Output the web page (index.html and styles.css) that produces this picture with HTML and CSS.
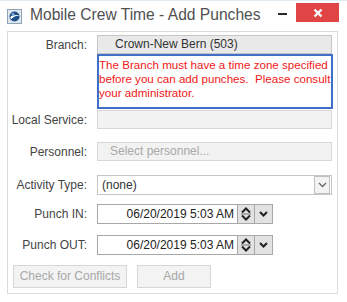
FILE: index.html
```html
<!DOCTYPE html>
<html>

<head>
  <link rel="stylesheet" href="styles.css">
</head>

<body>
  <div class="window">
    <div class="titlebar">
      <svg class="app-icon" width="15" height="15" viewBox="0 0 15 15">
        <rect x="0.5" y="0.5" width="14" height="14" fill="#dfe6ee" stroke="#8ea3b8"/>
        <circle cx="7.5" cy="7.5" r="5" fill="#1f4f86"/>
        <path d="M3 8.5 C5 6 9 5.5 12.5 6.5 C9.5 6.5 6.5 7.5 4.5 10 Z" fill="#ffffff"/>
        <circle cx="6" cy="5.5" r="1.4" fill="#7fb0e0"/>
      </svg>
      <span class="title">Mobile Crew Time - Add Punches</span>
      <span class="minimize"></span>
      <span class="close">
        <svg width="10" height="10" viewBox="0 0 10 10">
          <path d="M1.5 1.5 L8.5 8.5 M8.5 1.5 L1.5 8.5" stroke="#ffffff" stroke-width="2.4"/>
        </svg>
      </span>
    </div>

    <div class="panel">
      <div class="row row-branch">
        <span class="label">Branch:</span>
        <div class="field field-readonly">Crown-New Bern (503)</div>
      </div>
      <div class="row">
        <span class="label"></span>
        <div class="error">The Branch must have a time zone specified<br>before you can add punches.&nbsp; Please consult<br>your administrator.</div>
      </div>
      <div class="row row-local">
        <span class="label">Local Service:</span>
        <div class="field field-disabled"></div>
      </div>
      <div class="row row-personnel">
        <span class="label">Personnel:</span>
        <div class="field field-disabled placeholder">Select personnel...</div>
      </div>
      <div class="row row-activity">
        <span class="label">Activity Type:</span>
        <div class="field field-select">
          <span class="select-text">(none)</span>
          <span class="select-btn">
            <svg width="9" height="6" viewBox="0 0 9 6"><path d="M1 1 L4.5 4.5 L8 1" fill="none" stroke="#666" stroke-width="1.3"/></svg>
          </span>
        </div>
      </div>
      <div class="row row-punchin">
        <span class="label">Punch IN:</span>
        <div class="date-group">
          <div class="date-field">06/20/2019 5:03 AM</div>
          <span class="spin">
            <svg width="12" height="16" viewBox="0 0 12 16">
              <path d="M2 6.5 L6 2.5 L10 6.5" fill="none" stroke="#222" stroke-width="2"/>
              <line x1="1" y1="8" x2="11" y2="8" stroke="#777" stroke-width="1"/>
              <path d="M2 9.5 L6 13.5 L10 9.5" fill="none" stroke="#222" stroke-width="2"/>
            </svg>
          </span>
          <span class="drop">
            <svg width="9" height="6" viewBox="0 0 9 6"><path d="M1 1 L4.5 4.5 L8 1" fill="none" stroke="#222" stroke-width="2"/></svg>
          </span>
        </div>
      </div>
      <div class="row row-punchout">
        <span class="label">Punch OUT:</span>
        <div class="date-group">
          <div class="date-field">06/20/2019 5:03 AM</div>
          <span class="spin">
            <svg width="12" height="16" viewBox="0 0 12 16">
              <path d="M2 6.5 L6 2.5 L10 6.5" fill="none" stroke="#222" stroke-width="2"/>
              <line x1="1" y1="8" x2="11" y2="8" stroke="#777" stroke-width="1"/>
              <path d="M2 9.5 L6 13.5 L10 9.5" fill="none" stroke="#222" stroke-width="2"/>
            </svg>
          </span>
          <span class="drop">
            <svg width="9" height="6" viewBox="0 0 9 6"><path d="M1 1 L4.5 4.5 L8 1" fill="none" stroke="#222" stroke-width="2"/></svg>
          </span>
        </div>
      </div>
      <div class="buttons">
        <span class="button button-check">Check for Conflicts</span>
        <span class="button button-add">Add</span>
      </div>
    </div>
  </div>
</body>
</html>
```

FILE: styles.css
```css
body
{
   margin:0;
   background:#ffffff;
   font-family:"Liberation Sans", Arial, sans-serif;
}

.window
{
   width:347px;
   height:302px;
   background:#ffffff;
   border-top:1px solid #e3ebf3;
   box-sizing:border-box;
}

.titlebar
{
   display:flex;
   align-items:flex-start;
   height:30px;
}
.app-icon
{
   margin:8px 0 0 7px;
}
.title
{
   margin:5px 0 0 8px;
   font-size:15.6px;
   color:#505050;
   width:241px;
}
.minimize
{
   width:9px;
   height:2px;
   background:#2a2a2a;
   margin:12px 0 0 7px;
}
.close
{
   display:flex;
   align-items:center;
   justify-content:center;
   width:43px;
   height:19px;
   margin:2px 0 0 9px;
   background:#e04444;
}

.panel
{
   width:331px;
   height:263px;
   margin-left:7px;
   border:1px solid #dcdcdc;
   box-sizing:border-box;
   padding-top:3px;
}

.row
{
   display:flex;
   align-items:center;
}
.label
{
   width:79px;
   flex:none;
   text-align:right;
   padding-right:10px;
   font-size:12px;
   color:#444444;
}

.field
{
   box-sizing:border-box;
   width:235px;
   height:19px;
   font-size:12px;
   line-height:17px;
   border:1px solid #c6c6c6;
}
.field-readonly
{
   background:#e9e9e9;
   color:#333333;
   padding-left:17px;
}
.field-disabled
{
   background:#f2f2f2;
   border-color:#d8d8d8;
}
.placeholder
{
   color:#a8a8a8;
   padding-left:12px;
}

.error
{
   box-sizing:border-box;
   width:236px;
   height:55px;
   border:2px solid #3f6fc8;
   color:#f01818;
   font-size:11.6px;
   line-height:14px;
   white-space:nowrap;
   padding-top:2px;
   overflow:hidden;
}

.row-local
{
   margin-top:1px;
}
.row-personnel
{
   margin-top:13px;
}
.row-activity
{
   margin-top:14px;
}
.row-punchin
{
   margin-top:9px;
}
.row-punchout
{
   margin-top:11px;
}

.field-select
{
   display:flex;
   align-items:center;
   justify-content:space-between;
   height:20px;
   background:#ffffff;
   color:#333333;
   padding-left:4px;
}
.select-btn
{
   display:flex;
   align-items:center;
   justify-content:center;
   width:14px;
   height:16px;
   margin-right:1px;
   border:1px solid #c0c0c0;
   background:#f3f3f3;
}

.date-group
{
   display:flex;
   height:20px;
}
.date-field
{
   box-sizing:border-box;
   width:141px;
   height:20px;
   border:1px solid #a8a8a8;
   font-size:12px;
   line-height:18px;
   text-align:right;
   padding-right:3px;
   color:#222222;
}
.spin
{
   box-sizing:border-box;
   display:flex;
   align-items:center;
   justify-content:center;
   width:17px;
   height:20px;
   border:1px solid #a8a8a8;
   border-left:none;
   background:#e2e2e2;
}
.drop
{
   box-sizing:border-box;
   display:flex;
   align-items:center;
   justify-content:center;
   width:18px;
   height:20px;
   border:1px solid #a8a8a8;
   border-left:none;
   background:#e2e2e2;
}

.buttons
{
   display:flex;
   gap:10px;
   margin:10px 0 0 5px;
}
.button
{
   box-sizing:border-box;
   height:23px;
   border:1px solid #d6d6d6;
   background:#f3f3f3;
   color:#a8a8a8;
   font-size:12px;
   line-height:21px;
   text-align:center;
}
.button-check
{
   width:114px;
}
.button-add
{
   width:74px;
}
```
